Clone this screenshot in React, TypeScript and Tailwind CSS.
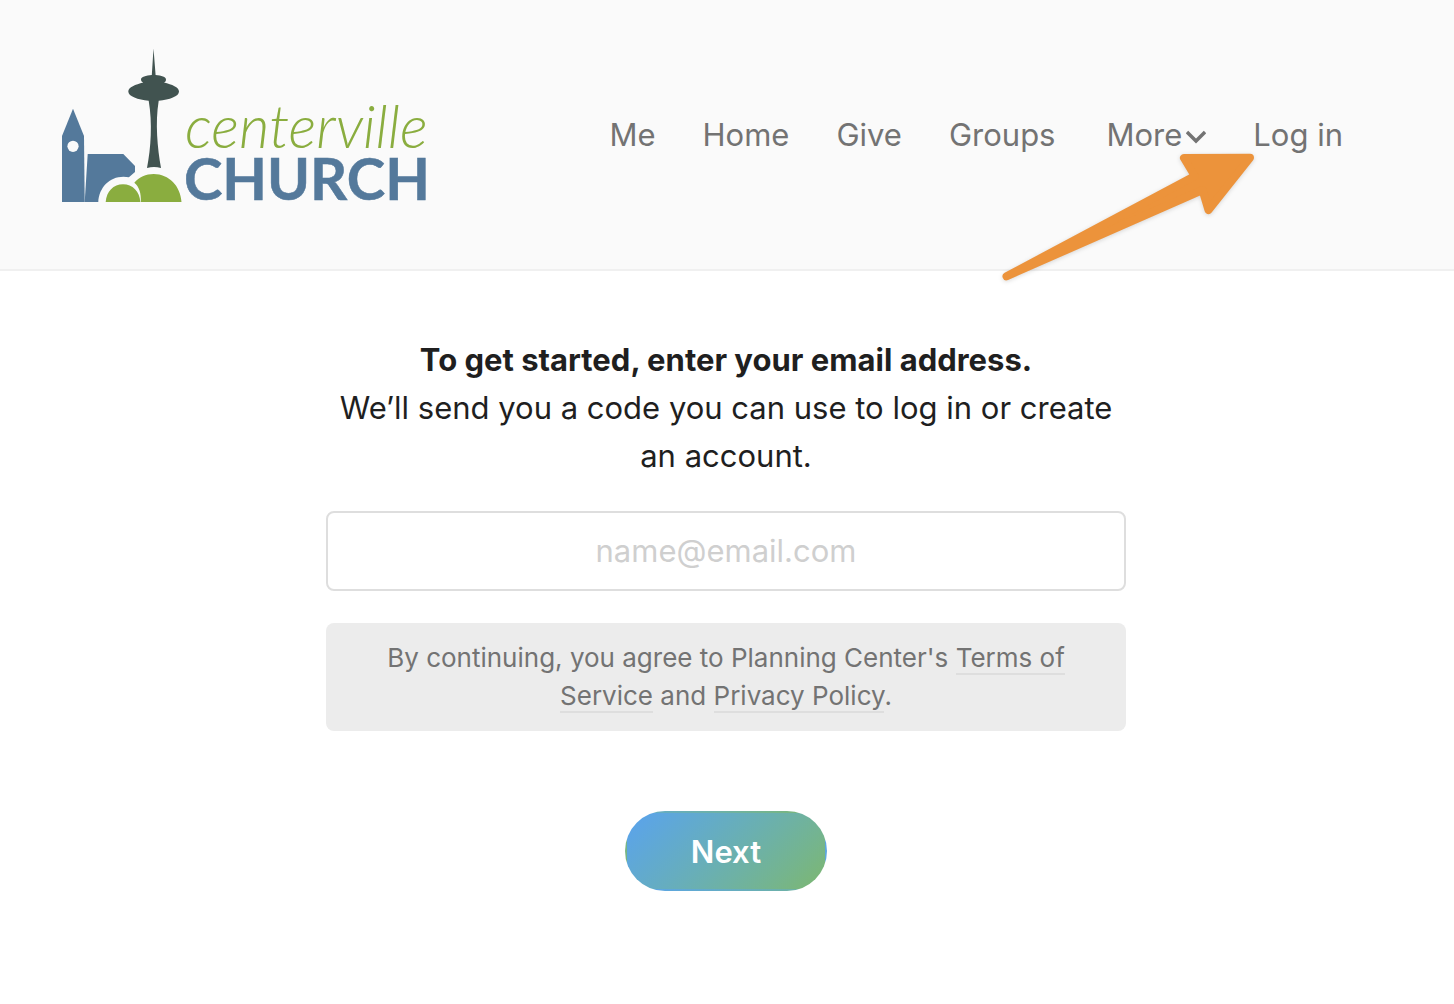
import { ReactNode } from "react";

/**
 * Church logo: skyline drawing with the wordmark beside it.
 */
const Logo = () => (
  <svg
    viewBox="0 0 380 166"
    className="w-[380px] h-[166px] shrink-0"
    role="img"
    aria-label="Centerville Church"
  >
    {/* Bell tower */}
    <path d="M0 154V88L11 60.7L22 88L22.7 154Z" fill="#54799b" />
    <circle cx="11" cy="98.3" r="5.6" fill="#fafafa" />
    {/* Chapel */}
    <path
      d="M22.7 154L25.7 106H61.3L73 118V124L66.9 129.2C50 126 37 138 36.3 154Z"
      fill="#54799b"
    />
    {/* Hills */}
    <path d="M43.7 154C44.3 143.5 51.5 136.3 61 136.3S77.7 143.5 78.3 154Z" fill="#8aad3f" />
    <path
      d="M78.8 154C79.4 145.5 77 138.5 72.3 134.8C77 129.3 84 126 91.7 126C107 126 118.5 138 119.5 154Z"
      fill="#8aad3f"
    />
    {/* Needle */}
    <path
      d="M91.5 0.5L89.8 27C84 27.4 79 29 79 31.5C79 33 80 34 81.3 34.6C73.5 36.5 66.3 39.5 66.3 43.5C66.3 48.5 76 51.7 86.7 52.7C90.5 75 89 100 85 120Q92 118 99 120C95.5 100 93 75 96.7 52.7C107.5 51.7 117 48.5 117 43.5C117 39.5 110 36.5 102 34.6C103.3 34 104 33 104 31.5C104 29 99.5 27.4 93.6 27Z"
      fill="#415350"
    />
    <text x="123" y="100" className="font-['Lato'] font-light italic text-[59px]" fill="#8aad3f">
      centerville
    </text>
    <text
      x="122"
      y="152"
      className="font-['Lato'] font-bold text-[58px]"
      fill="#54799b"
      stroke="#54799b"
      strokeWidth="0.5"
    >
      CHURCH
    </text>
  </svg>
);

/**
 * Arrow that points from the page up to the log in link.
 */
const PointerArrow = () => (
  <svg
    viewBox="0 0 270 190"
    className="absolute right-[83px] top-[-11px] w-[270px] h-[190px] max-w-none pointer-events-none drop-shadow-sm"
    aria-hidden="true"
  >
    <path
      d="M16.5 176.3L204.8 76L194 58L260 57.8L218.5 110L212.5 90Z"
      fill="#ec933b"
      stroke="#ec933b"
      strokeWidth="8"
      strokeLinejoin="round"
    />
  </svg>
);

const NavLink = ({ children }: { children: ReactNode }) => (
  <a href="#" className="hover:text-[#444444]">
    {children}
  </a>
);

const TermsLink = ({ children }: { children: ReactNode }) => (
  <a href="#" className="border-b-2 border-[#dedede]">
    {children}
  </a>
);

const App = () => {
  return (
    <div className="min-h-screen w-full bg-white font-['Inter',sans-serif] text-[#1f1f1f]">
      {/* Header with logo and navigation */}
      <header className="flex items-center justify-between bg-[#fafafa] border-b-2 border-[#f0f0f0] pl-[62px] pr-[111px] pt-12 pb-[55px]">
        <Logo />
        <nav className="flex items-center gap-[47px] pt-2 text-[31px] leading-[48px] text-[#737373] whitespace-nowrap">
          <NavLink>Me</NavLink>
          <NavLink>Home</NavLink>
          <NavLink>Give</NavLink>
          <NavLink>Groups</NavLink>
          <button type="button" className="ml-1 flex items-center gap-1">
            More
            <svg viewBox="0 0 20 14" className="mt-1 w-5 h-[14px]" fill="none" aria-hidden="true">
              <path d="M1 2L10 11L19 2" stroke="currentColor" strokeWidth="3.4" />
            </svg>
          </button>
          <div className="relative">
            <NavLink>Log in</NavLink>
            <PointerArrow />
          </div>
        </nav>
      </header>

      {/* Log in form */}
      <main className="pl-6 pr-[26px] pt-[65px]">
        <form className="w-full max-w-[800px] mx-auto flex flex-col items-center text-center">
          <label htmlFor="email" className="text-[31px] leading-[48px]">
            <strong className="block font-bold">To get started, enter your email address.</strong>
            We’ll send you a code you can use to log in or create an account.
          </label>
          <input
            id="email"
            type="email"
            placeholder="name@email.com"
            className="mt-[31px] h-20 w-full rounded-lg border-2 border-[#dedede] bg-white px-4 pb-0.5 text-center text-[31px] placeholder:text-[#cfcfcf]"
          />
          <p className="mt-8 w-full rounded-lg bg-[#ececec] px-12 py-4 text-[26px] leading-[38px] text-[#737373]">
            By continuing, you agree to Planning Center's <TermsLink>Terms of Service</TermsLink> and{" "}
            <TermsLink>Privacy Policy</TermsLink>.
          </p>
          <button
            type="button"
            className="mt-20 h-20 rounded-full border-2 border-transparent bg-linear-135 from-[#5aa2ee] to-[#7db76f] px-16 pt-0.5 text-[31px] font-semibold text-white"
          >
            Next
          </button>
        </form>
      </main>
    </div>
  );
};

export default App;
